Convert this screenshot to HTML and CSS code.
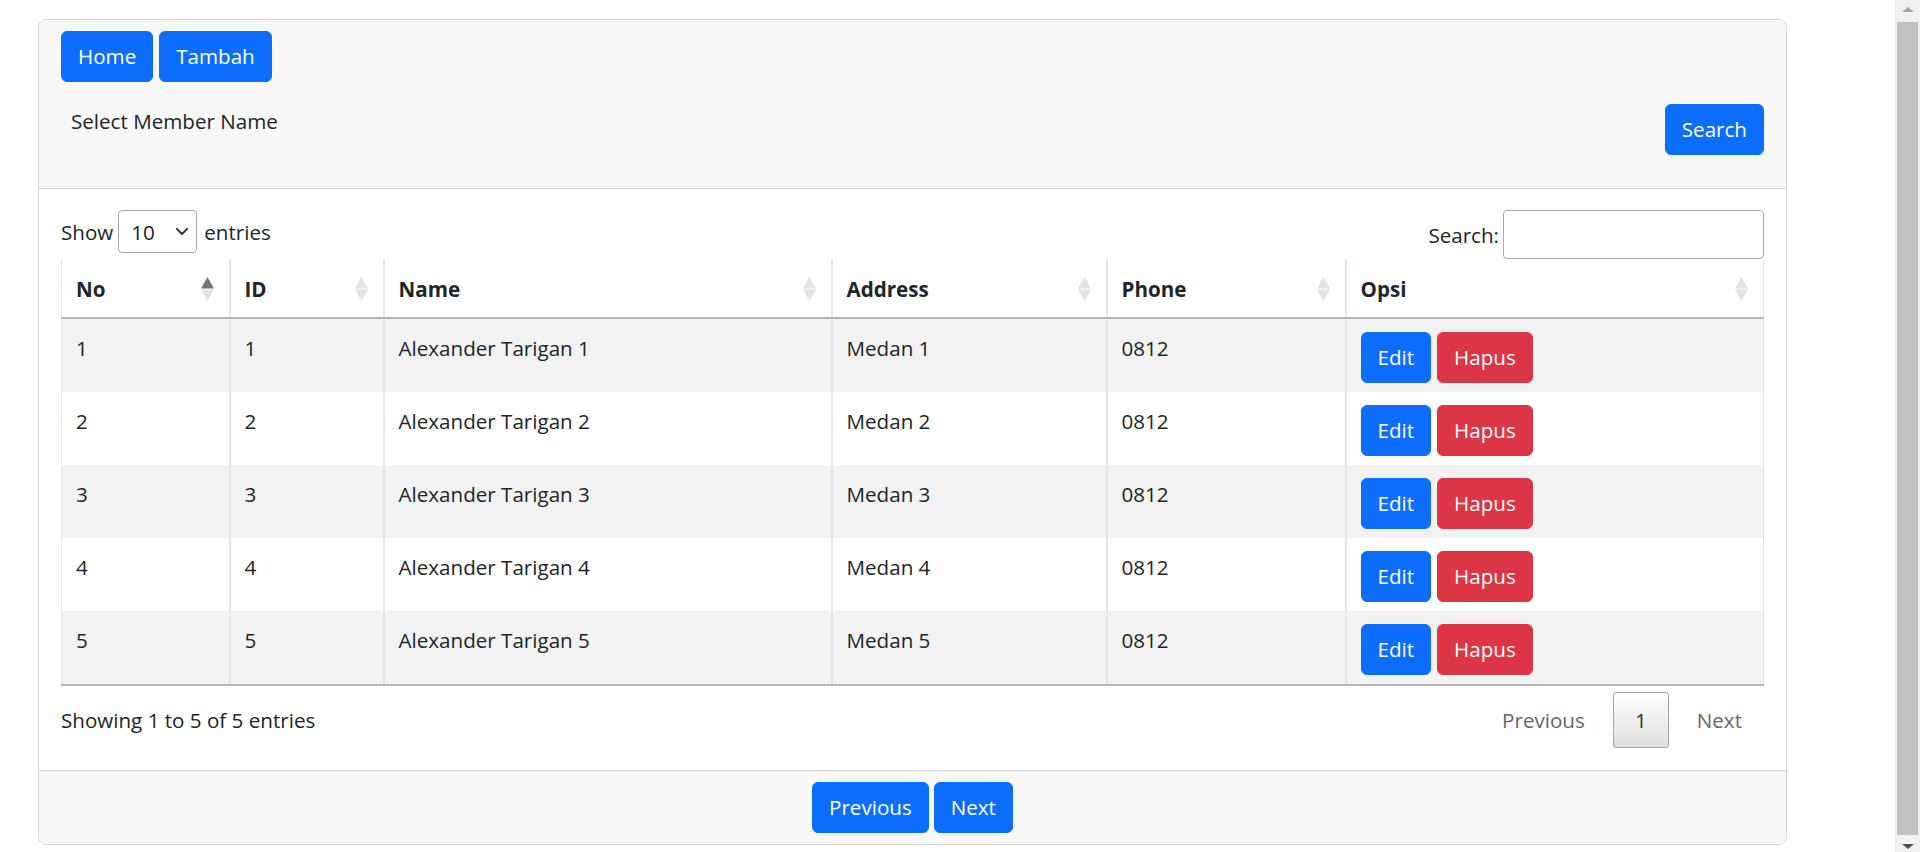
FILE: index.html
```html
<!DOCTYPE html>
<html lang="id">
<head>
<meta charset="utf-8">
<title>Data Member</title>
<link rel="stylesheet" href="styles.css">
</head>
<body>
<div class="page">
  <div class="card">
    <div class="card-header">
      <div class="nav-buttons">
        <a class="btn btn-primary" href="#">Home</a>
        <a class="btn btn-primary" href="#">Tambah</a>
      </div>
      <form class="search-row">
        <label class="member-label">Select Member Name</label>
        <button class="btn btn-primary" type="button">Search</button>
      </form>
    </div>
    <div class="card-body">
      <div class="dt-top">
        <div class="dt-length">
          <span>Show</span>
          <span class="select-wrap">
            <select class="dt-select"><option>10</option><option>25</option><option>50</option><option>100</option></select>
            <svg class="chev" width="12" height="7" viewBox="0 0 12 7"><path d="M1 1 L6 6 L11 1" fill="none" stroke="#343a40" stroke-width="2" stroke-linecap="round" stroke-linejoin="round"/></svg>
          </span>
          <span>entries</span>
        </div>
        <div class="dt-filter">
          <label>Search:</label>
          <input type="search" class="dt-input">
        </div>
      </div>
      <table class="dt">
        <colgroup>
          <col class="c-no"><col class="c-id"><col class="c-name"><col class="c-addr"><col class="c-phone"><col class="c-opsi">
        </colgroup>
        <thead>
          <tr>
            <th><div class="th"><span>No</span><svg class="sort" width="13" height="24" viewBox="0 0 13 24"><path d="M6.5 0 L13 11.5 H0 Z" fill="#767676"/><path d="M0 12.5 H13 L6.5 24 Z" fill="#e2e2e2"/></svg></div></th>
            <th><div class="th"><span>ID</span><svg class="sort" width="13" height="24" viewBox="0 0 13 24"><path d="M6.5 0 L13 11.5 H0 Z" fill="#e2e2e2"/><path d="M0 12.5 H13 L6.5 24 Z" fill="#e2e2e2"/></svg></div></th>
            <th><div class="th"><span>Name</span><svg class="sort" width="13" height="24" viewBox="0 0 13 24"><path d="M6.5 0 L13 11.5 H0 Z" fill="#e2e2e2"/><path d="M0 12.5 H13 L6.5 24 Z" fill="#e2e2e2"/></svg></div></th>
            <th><div class="th"><span>Address</span><svg class="sort" width="13" height="24" viewBox="0 0 13 24"><path d="M6.5 0 L13 11.5 H0 Z" fill="#e2e2e2"/><path d="M0 12.5 H13 L6.5 24 Z" fill="#e2e2e2"/></svg></div></th>
            <th><div class="th"><span>Phone</span><svg class="sort" width="13" height="24" viewBox="0 0 13 24"><path d="M6.5 0 L13 11.5 H0 Z" fill="#e2e2e2"/><path d="M0 12.5 H13 L6.5 24 Z" fill="#e2e2e2"/></svg></div></th>
            <th><div class="th"><span>Opsi</span><svg class="sort" width="13" height="24" viewBox="0 0 13 24"><path d="M6.5 0 L13 11.5 H0 Z" fill="#e2e2e2"/><path d="M0 12.5 H13 L6.5 24 Z" fill="#e2e2e2"/></svg></div></th>
          </tr>
        </thead>
        <tbody>
          <tr><td>1</td><td>1</td><td>Alexander Tarigan 1</td><td>Medan 1</td><td>0812</td><td><div class="actions"><a class="btn btn-primary" href="#">Edit</a><a class="btn btn-danger" href="#">Hapus</a></div></td></tr>
          <tr><td>2</td><td>2</td><td>Alexander Tarigan 2</td><td>Medan 2</td><td>0812</td><td><div class="actions"><a class="btn btn-primary" href="#">Edit</a><a class="btn btn-danger" href="#">Hapus</a></div></td></tr>
          <tr><td>3</td><td>3</td><td>Alexander Tarigan 3</td><td>Medan 3</td><td>0812</td><td><div class="actions"><a class="btn btn-primary" href="#">Edit</a><a class="btn btn-danger" href="#">Hapus</a></div></td></tr>
          <tr><td>4</td><td>4</td><td>Alexander Tarigan 4</td><td>Medan 4</td><td>0812</td><td><div class="actions"><a class="btn btn-primary" href="#">Edit</a><a class="btn btn-danger" href="#">Hapus</a></div></td></tr>
          <tr><td>5</td><td>5</td><td>Alexander Tarigan 5</td><td>Medan 5</td><td>0812</td><td><div class="actions"><a class="btn btn-primary" href="#">Edit</a><a class="btn btn-danger" href="#">Hapus</a></div></td></tr>
        </tbody>
      </table>
      <div class="dt-bottom">
        <div class="dt-info">Showing 1 to 5 of 5 entries</div>
        <div class="dt-paging">
          <span class="pg disabled">Previous</span>
          <span class="pg current">1</span>
          <span class="pg disabled">Next</span>
        </div>
      </div>
    </div>
    <div class="card-footer">
      <a class="btn btn-primary" href="#">Previous</a>
      <a class="btn btn-primary" href="#">Next</a>
    </div>
  </div>
</div>
<div class="scrollbar" aria-hidden="true">
  <span class="sb-up"></span>
  <span class="sb-thumb"></span>
  <span class="sb-down"></span>
</div>
</body>
</html>
```

FILE: styles.css
```css
* { box-sizing: border-box; }

html, body {
  margin: 0;
  background: #fff;
}

body {
  font-family: "Open Sans", "Noto Sans", sans-serif;
  font-size: 20.6px;
  line-height: 32px;
  color: #212529;
}

.page {
  padding: 19px 0 0 38px;
}

.card {
  width: 1749px;
  border: 1px solid #d5d5d5;
  border-radius: 8px;
  overflow: hidden;
  background: #fff;
}

.card-header {
  background: #f7f7f7;
  border-bottom: 1px solid #d5d5d5;
  padding: 11px 22px;
}

.nav-buttons {
  display: flex;
  gap: 6px;
}

.search-row {
  display: flex;
  justify-content: space-between;
  align-items: flex-start;
  margin: 22px 0;
}

.member-label {
  padding: 1px 0 0 10px;
}

.btn {
  display: inline-block;
  font: inherit;
  line-height: 31px;
  padding: 9px 16px;
  border: 1px solid transparent;
  border-radius: 6px;
  color: #fff;
  text-decoration: none;
  cursor: pointer;
}

.btn-primary {
  background: #0d6efd;
  border-color: #0d6efd;
}

.btn-danger {
  background: #dc3545;
  border-color: #dc3545;
}

.card-body {
  padding: 21px 22px 21px;
}

.dt-top {
  display: flex;
  justify-content: space-between;
  align-items: flex-start;
}

.dt-length {
  display: flex;
  align-items: center;
  gap: 5px;
  height: 43px;
}

.select-wrap {
  position: relative;
  display: inline-block;
  margin-right: 2px;
}

.dt-select {
  appearance: none;
  -webkit-appearance: none;
  width: 79px;
  height: 43px;
  border: 1px solid #aaa;
  border-radius: 4px;
  background: #fff;
  font: inherit;
  color: #212529;
  padding: 0 12px;
}

.chev {
  position: absolute;
  left: 58px;
  top: 18px;
  pointer-events: none;
}

.dt-filter {
  display: flex;
  align-items: center;
  gap: 4px;
}

.dt-input {
  width: 261px;
  height: 49px;
  border: 1px solid #aaa;
  border-radius: 4px;
  font: inherit;
  padding: 0 8px;
  background: #fff;
}

.dt {
  width: 100%;
  border-collapse: collapse;
  table-layout: fixed;
}

.c-no { width: 168px; }
.c-id { width: 154px; }
.c-name { width: 448px; }
.c-addr { width: 275px; }
.c-phone { width: 239px; }
.c-opsi { width: 418px; }

.dt th,
.dt td {
  border-left: 2px solid #e1e4e8;
  text-align: left;
  vertical-align: top;
}

.dt th:first-child,
.dt td:first-child {
  border-left-width: 1px;
}

.dt th:last-child,
.dt td:last-child {
  border-right: 1px solid #e1e4e8;
}

.dt th {
  font-weight: 700;
  padding: 14px 15px 12px 14px;
  border-bottom: 2px solid #b5b5b5;
  background: #fff;
}

.th {
  display: flex;
  justify-content: space-between;
  align-items: center;
}

.sort {
  flex: none;
}

.dt td {
  padding: 13px 14px 9px;
}

.dt tbody tr:nth-child(odd) td {
  background: #f2f2f2;
}

.dt tbody tr:last-child td {
  border-bottom: 2px solid #b5b5b5;
}

.actions {
  display: flex;
  gap: 6px;
}

.dt-bottom {
  display: flex;
  justify-content: space-between;
  align-items: center;
  padding-top: 6px;
  padding-bottom: 1px;
}

.dt-paging {
  display: flex;
  gap: 6px;
}

.pg {
  padding: 11px 21px;
  line-height: 32px;
  border: 1px solid transparent;
  border-radius: 3px;
  color: #666;
}

.pg.current {
  width: 56px;
  height: 56px;
  padding: 0;
  display: flex;
  align-items: center;
  justify-content: center;
  border-color: #a6a6a6;
  background: linear-gradient(#ffffff, #dedede);
  color: #333;
}

.card-footer {
  background: #f7f7f7;
  border-top: 1px solid #d5d5d5;
  padding: 11px 22px;
  display: flex;
  justify-content: center;
  gap: 5px;
}

.scrollbar {
  position: fixed;
  top: 0;
  right: 0;
  width: 25px;
  height: 852px;
  background: #f1f1f1;
  display: flex;
  flex-direction: column;
  align-items: center;
}

.sb-up {
  margin-top: 7px;
  width: 0;
  height: 0;
  border-left: 6px solid transparent;
  border-right: 6px solid transparent;
  border-bottom: 5px solid #a3a3a3;
}

.sb-thumb {
  margin-top: 10px;
  width: 21px;
  height: 813px;
  background: #c1c1c1;
}

.sb-down {
  margin-top: 9px;
  width: 0;
  height: 0;
  border-left: 6px solid transparent;
  border-right: 6px solid transparent;
  border-top: 5px solid #505050;
}
```
